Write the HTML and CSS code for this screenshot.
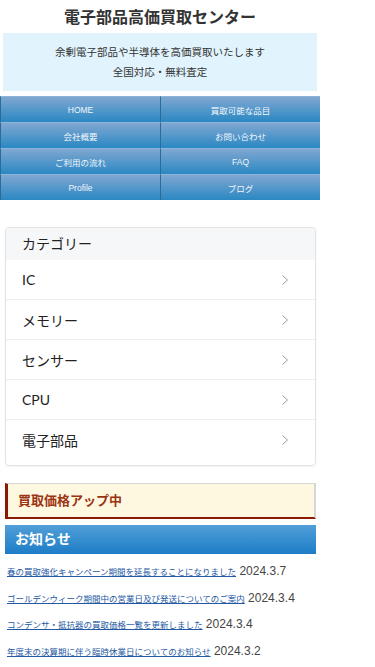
FILE: index.html
```html
<!DOCTYPE html>
<html lang="ja">
<head>
<meta charset="utf-8">
<meta name="viewport" content="width=device-width, initial-scale=1">
<title>電子部品高価買取センター</title>
<link rel="stylesheet" href="styles.css">
</head>
<body>

<div class="page">
    <h1 class="site-title">電子部品高価買取センター</h1>

    <div class="intro">
        <p>余剰電子部品や半導体を高価買取いたします<br>全国対応・無料査定</p>
    </div>

    <ul class="global-nav">
        <li><a href="#">HOME</a></li>
        <li><a href="#">買取可能な品目</a></li>
        <li><a href="#">会社概要</a></li>
        <li><a href="#">お問い合わせ</a></li>
        <li><a href="#">ご利用の流れ</a></li>
        <li><a href="#">FAQ</a></li>
        <li><a href="#">Profile</a></li>
        <li><a href="#">ブログ</a></li>
    </ul>

    <div class="category">
        <div class="category-head">カテゴリー</div>
        <ul class="category-list">
            <li><a href="#"><span>IC</span><svg class="chevron" width="6" height="10" viewBox="0 0 6 10"><polyline points="0.5,0.5 5.5,5 0.5,9.5"/></svg></a></li>
            <li><a href="#"><span>メモリー</span><svg class="chevron" width="6" height="10" viewBox="0 0 6 10"><polyline points="0.5,0.5 5.5,5 0.5,9.5"/></svg></a></li>
            <li><a href="#"><span>センサー</span><svg class="chevron" width="6" height="10" viewBox="0 0 6 10"><polyline points="0.5,0.5 5.5,5 0.5,9.5"/></svg></a></li>
            <li><a href="#"><span>CPU</span><svg class="chevron" width="6" height="10" viewBox="0 0 6 10"><polyline points="0.5,0.5 5.5,5 0.5,9.5"/></svg></a></li>
            <li><a href="#"><span>電子部品</span><svg class="chevron" width="6" height="10" viewBox="0 0 6 10"><polyline points="0.5,0.5 5.5,5 0.5,9.5"/></svg></a></li>
        </ul>
    </div>

    <div class="notice">買取価格アップ中</div>

    <h2 class="news-title">お知らせ</h2>
    <ul class="news">
        <li><a href="#">春の買取強化キャンペーン期間を延長することになりました</a> <span class="news-date">2024.3.7</span></li>
        <li><a href="#">ゴールデンウィーク期間中の営業日及び発送についてのご案内</a> <span class="news-date">2024.3.4</span></li>
        <li><a href="#">コンデンサ・抵抗器の買取価格一覧を更新しました</a> <span class="news-date">2024.3.4</span></li>
        <li><a href="#">年度末の決算期に伴う臨時休業日についてのお知らせ</a> <span class="news-date">2024.3.2</span></li>
    </ul>
</div>

</body>
</html>
```

FILE: styles.css
```css
body {
    margin: 0;
    background-color: #fff;
    color: #333;
    font-family: "Liberation Sans", Arial, "Noto Sans CJK JP", sans-serif;
}
.page {
    width: 320px;
}

/* header */
.site-title {
    margin: 8px 0 5px;
    font-size: 16px;
    line-height: 20px;
    font-weight: bold;
    text-align: center;
    color: #333;
}
.intro {
    margin: 0 3px;
    padding: 9px 0;
    background-color: #e1f4fd;
    text-align: center;
}
.intro p {
    margin: 0;
    font-size: 10.5px;
    line-height: 20px;
    color: #333;
}

/* nav */
.global-nav {
    list-style: none;
    margin: 5px 0 0;
    padding: 0;
    display: grid;
    grid-template-columns: 1fr 1fr;
}
.global-nav li {
    height: 25px;
    border-top: 1px solid #8fb4d9;
    border-left: 1px solid #2a6b97;
    background: linear-gradient(#80a7d1, #2a88c3);
}
.global-nav a {
    display: flex;
    align-items: center;
    justify-content: center;
    height: 100%;
    font-size: 8.5px;
    color: #f2f6fa;
    text-decoration: none;
}

/* category box */
.category {
    margin: 27px 4px 0 5px;
    padding-bottom: 6px;
    border: 1px solid #e2e2e2;
    border-radius: 4px;
    box-shadow: 0 1px 2px rgba(0, 0, 0, 0.06);
    font-family: Lato, "Noto Sans CJK JP", sans-serif;
}
.category-head {
    height: 32px;
    line-height: 32px;
    padding-left: 16px;
    background-color: #f6f7f9;
    border-radius: 4px 4px 0 0;
    font-size: 14px;
    color: #222;
}
.category-list {
    list-style: none;
    margin: 0;
    padding: 0;
}
.category-list li + li {
    border-top: 1px solid #eeeeee;
}
.category-list a {
    display: flex;
    align-items: center;
    justify-content: space-between;
    height: 39px;
    padding: 0 27px 0 16px;
    font-size: 14px;
    color: #222;
    text-decoration: none;
}
.chevron {
    fill: none;
    stroke: #9a9a9a;
    stroke-width: 1;
}

/* notice */
.notice {
    margin: 17px 4px 0 5px;
    height: 33px;
    line-height: 33px;
    padding-left: 10px;
    background-color: #fff8e1;
    border-top: 1px solid #d6d6d6;
    border-right: 2px solid #d6d6d6;
    border-left: 3px solid #8b1b00;
    border-bottom: 2px solid #8b1b00;
    font-size: 13px;
    font-weight: bold;
    color: #9b3412;
}

/* news */
.news-title {
    margin: 6px 4px 0 5px;
    height: 29px;
    line-height: 29px;
    padding-left: 10px;
    background: linear-gradient(#519fd8, #1d7dc6);
    font-size: 14px;
    font-weight: bold;
    color: #fff;
}
.news {
    list-style: none;
    margin: 5px 0 0;
    padding: 0 0 0 7px;
}
.news li {
    line-height: 25.5px;
    font-size: 12px;
    white-space: nowrap;
    color: #444;
}
.news a {
    font-size: 8.5px;
    color: #2458a3;
}
```
